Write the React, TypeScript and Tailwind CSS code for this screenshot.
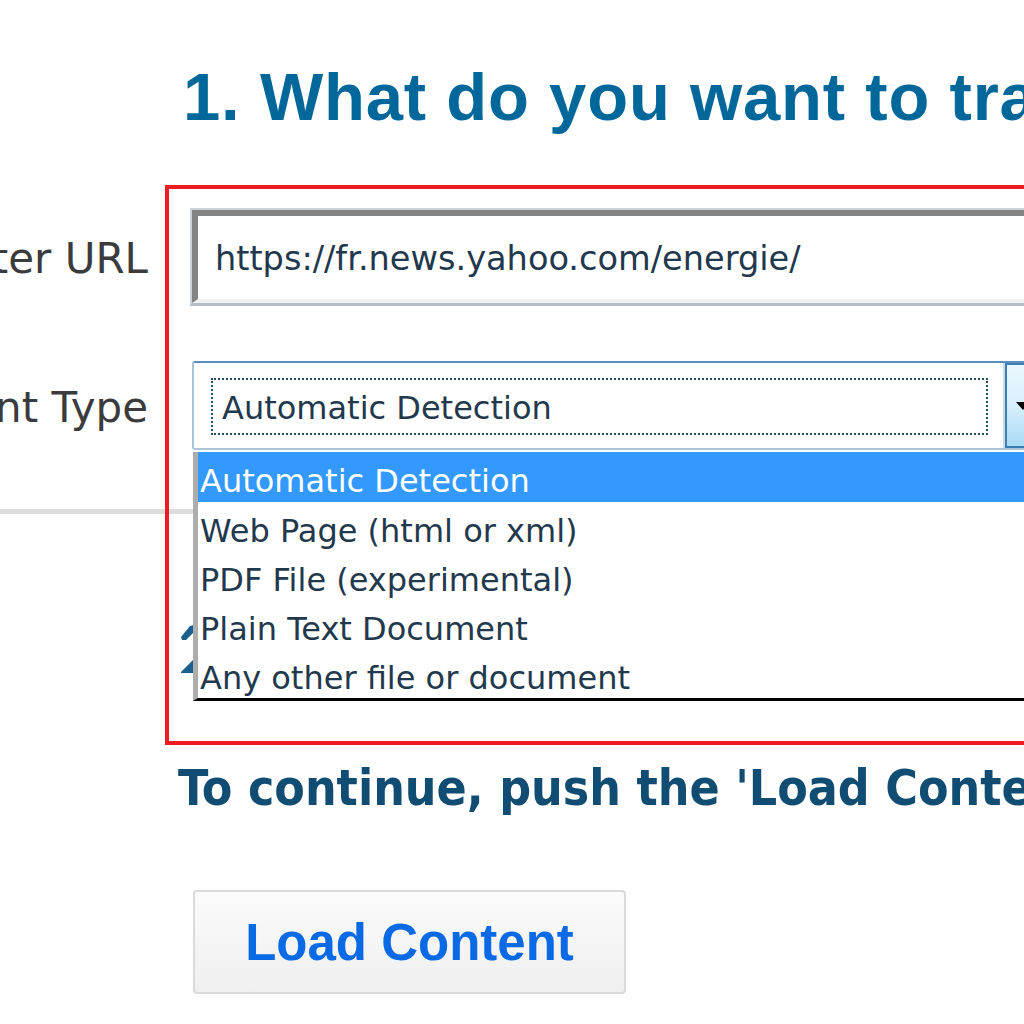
const options = [
  'Automatic Detection',
  'Web Page (html or xml)',
  'PDF File (experimental)',
  'Plain Text Document',
  'Any other file or document',
]

const UrlInput = () => {
  return (
    <div className="w-[1000px] shrink-0 border-2 border-[#cbd3da] border-b-[3px] border-b-[#b3bec8]">
      <div className="h-[93px] border-t-[6px] border-l-[6px] border-[#838383] border-b-[4px] border-b-[#eff0f1] flex items-center pl-[17px] pt-[2px]">
        <span className="whitespace-nowrap text-[33.6px] leading-none text-[#22384d]">https://fr.news.yahoo.com/energie/</span>
      </div>
    </div>
  )
}

const TypeSelect = () => {
  return (
    <div className="relative w-[1000px] shrink-0">
      <div className="flex h-[89px] bg-white border-2 border-[#a9c3d9] border-t-[#5a8fbd] rounded-[3px]">
        <div className="w-[811px] shrink-0 pl-[17px] pt-[15px] pr-[15px] pb-[13px] border-r-2 border-[#c9dbe9]">
          <div className="h-full border-2 border-dotted border-[#234e66] flex items-center pl-[9px] pt-[2px]">
            <span className="whitespace-nowrap text-[32px] leading-none text-[#22384d]">Automatic Detection</span>
          </div>
        </div>
        <div className="flex-1 border-2 border-[#3c7fb1] bg-gradient-to-b from-[#eaf6fd] via-[#d7effc] to-[#a9daf5] flex items-center pl-[9px]">
          <svg width="14" height="8" viewBox="0 0 14 8">
            <polygon points="0,0 14,0 7,8" fill="#000" />
          </svg>
        </div>
      </div>

      {/* open list */}
      <ul className="absolute z-10 top-[calc(100%+2px)] left-[1px] w-[900px] bg-white border-l-[5px] border-[#adadad] border-b-[3px] border-b-black">
        {options.map((o, i) => (
          <li
            key={i}
            className={
              i === 0
                ? 'h-[50px] flex items-center pl-[2px] pt-[8px] bg-[#3399ff] text-white text-[32px] leading-none whitespace-nowrap'
                : 'h-[49px] flex items-center pl-[2px] pt-[8px] text-[#22384d] text-[32px] leading-none whitespace-nowrap'
            }
          >
            {o}
          </li>
        ))}
      </ul>
    </div>
  )
}

export default function App() {
  return (
    <div className="relative w-[1024px] h-[1024px] overflow-hidden bg-white font-['DejaVu_Sans',sans-serif]">
      <h1 className="pt-[63px] pl-[183px] whitespace-nowrap font-['Liberation_Sans',Arial,sans-serif] font-bold text-[67px] leading-[67px] tracking-[0.8px] text-[#00679b]">
        1. What do you want to translate?
      </h1>

      <div className="mt-[78px] flex flex-col gap-[55px]">
        <div className="flex items-center">
          <div className="w-[148px] shrink-0 flex justify-end pt-[4px]">
            <span className="whitespace-nowrap text-[42px] leading-none text-[#3b3b3d]">Enter URL</span>
          </div>
          <div className="ml-[42px]">
            <UrlInput />
          </div>
        </div>
        <div className="flex items-center">
          <div className="w-[148px] shrink-0 flex justify-end pt-[4px]">
            <span className="whitespace-nowrap text-[42px] leading-none text-[#3b3b3d]">Content Type</span>
          </div>
          <div className="ml-[44px]">
            <TypeSelect />
          </div>
        </div>
      </div>

      <div className="mt-[59px] h-[5px] bg-[#dddddd]" />

      {/* options hidden behind the open list */}
      <div className="mt-[106px] pl-[180px] flex flex-col">
        <div className="h-[38px] flex items-start pt-[3px]">
          <svg width="14" height="18" viewBox="0 0 14 18">
            <polygon points="1,14 10,3 14,2 14,9 6,17 2,17" fill="#1b5f8e" />
          </svg>
        </div>
        <div className="h-[50px] flex items-start">
          <svg width="14" height="16" viewBox="0 0 14 16">
            <polygon points="1,14 13,2 14,2 14,15 1,15" fill="#1b5f8e" />
          </svg>
        </div>
      </div>

      <p className="mt-[56px] pl-[178px] whitespace-nowrap font-bold text-[49.5px] leading-[48px] [font-stretch:semi-condensed] text-[#114d73]">
        To continue, push the 'Load Content' button
      </p>

      <button className="mt-[78px] ml-[193px] w-[433px] h-[104px] border-2 border-[#dadada] rounded-[4px] bg-gradient-to-b from-[#fbfbfb] to-[#efefef] font-['Liberation_Sans',Arial,sans-serif] font-bold text-[51px] leading-none text-[#0a69e4]">
        Load Content
      </button>

      {/* red highlight drawn over the screenshot */}
      <div className="absolute z-20 left-[165px] top-[185px] w-[900px] h-[560px] border-4 border-[#ed1c24] pointer-events-none" />
    </div>
  )
}
